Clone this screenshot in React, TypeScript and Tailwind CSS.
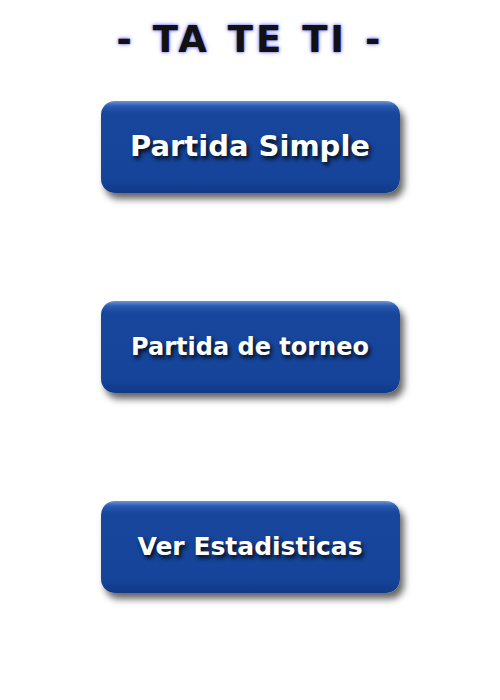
import React from 'react';

const font = { fontFamily: '"Comic Sans MS", "DejaVu Sans", sans-serif' };

const MenuButton: React.FC<{ label: string; size: string }> = ({ label, size }) => (
  <button
    className="w-[299px] h-[92px] rounded-[14px] bg-[linear-gradient(to_bottom,#6d96d8_0px,#2a5bb0_5px,#17469c_12px,#15449a_85%,#103a88_100%)] shadow-[4px_6px_7px_rgba(0,0,0,0.6)] flex items-center justify-center"
  >
    <span
      className={`${size} font-bold text-white [text-shadow:2px_3px_4px_rgba(0,0,0,0.85)]`}
      style={font}
    >
      {label}
    </span>
  </button>
);

export default function App() {
  return (
    <div className="w-[500px] h-[700px] bg-white flex flex-col items-center">
      <h1
        className="mt-[17px] h-[46px] text-[37px] font-bold text-[#111] tracking-[3px] [word-spacing:2px] leading-[46px] [text-shadow:0_0_4px_#6d6df5,0_0_2px_#9a9aff]"
        style={font}
      >
        - TA TE TI -
      </h1>
      <div className="mt-[38px] flex flex-col gap-[108px]">
        <MenuButton label="Partida Simple" size="text-[29px]" />
        <MenuButton label="Partida de torneo" size="text-[24px]" />
        <MenuButton label="Ver Estadisticas" size="text-[25px]" />
      </div>
    </div>
  );
}
